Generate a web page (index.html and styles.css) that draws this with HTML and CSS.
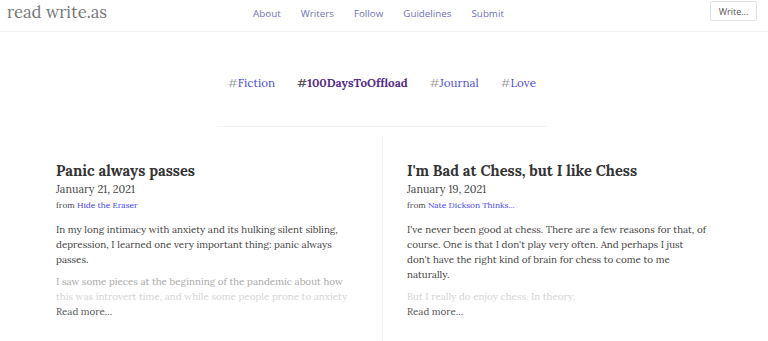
FILE: index.html
```html
<!DOCTYPE html>
<html lang="en">
<head>
<meta charset="utf-8">
<title>Read Write.as</title>
<link rel="stylesheet" href="styles.css">
</head>
<body>
<header class="topbar">
  <a class="logo" href="#">read write.as</a>
  <nav class="nav">
    <a href="#">About</a>
    <a href="#">Writers</a>
    <a href="#">Follow</a>
    <a href="#">Guidelines</a>
    <a href="#">Submit</a>
  </nav>
  <div class="actions"><a class="btn" href="#">Write...</a></div>
</header>

<main class="wrap">
  <div class="tags">
    <a class="tag" href="#"><span class="hash">#</span>Fiction</a>
    <a class="tag tag-active" href="#"><span class="hash">#</span>100DaysToOffload</a>
    <a class="tag" href="#"><span class="hash">#</span>Journal</a>
    <a class="tag" href="#"><span class="hash">#</span>Love</a>
  </div>
  <hr class="rule">

  <div class="posts">
    <article class="post">
      <h2 class="post-title">Panic always passes</h2>
      <div class="post-date">January 21, 2021</div>
      <div class="post-from">from <a href="#">Hide the Eraser</a></div>
      <div class="excerpt">
        <p>In my long intimacy with anxiety and its hulking silent sibling, depression, I learned one very important thing: panic always passes.</p>
        <p>I saw some pieces at the beginning of the pandemic about how this was introvert time, and while some people prone to anxiety</p>
      </div>
      <a class="more" href="#">Read more...</a>
    </article>
    <article class="post post-right">
      <h2 class="post-title">I'm Bad at Chess, but I like Chess</h2>
      <div class="post-date">January 19, 2021</div>
      <div class="post-from">from <a href="#">Nate Dickson Thinks...</a></div>
      <div class="excerpt">
        <p>I've never been good at chess. There are a few reasons for that, of course. One is that I don't play very often. And perhaps I just don't have the right kind of brain for chess to come to me naturally.</p>
        <p>But I really do enjoy chess. In theory.</p>
      </div>
      <a class="more" href="#">Read more...</a>
    </article>
  </div>
</main>
</body>
</html>
```
FILE: styles.css
```css
* { box-sizing: border-box; }
html, body { background: #fff; }
body {
  margin: 0;
  font-family: "Lora", "Liberation Serif", serif;
  color: #333;
  overflow: hidden;
}
a { text-decoration: none; }

.topbar {
  display: grid;
  grid-template-columns: 1fr auto 1fr;
  align-items: center;
  height: 32px;
  padding: 0 11px 0 7px;
  border-bottom: 1px solid #f2f2f2;
}
.logo {
  font-family: "Lora", "Liberation Serif", serif;
  font-size: 16.6px;
  color: #777;
  line-height: 1;
  margin-top: -6px;
}
.nav {
  display: flex;
  gap: 20px;
  margin-right: 7px;
  margin-top: -5px;
}
.nav a {
  font-family: "Open Sans", "Noto Sans", sans-serif;
  font-size: 9.8px;
  color: #7070bc;
}
.actions { display: flex; justify-content: flex-end; margin-top: -9px; }
.btn {
  display: inline-flex;
  align-items: center;
  justify-content: center;
  width: 47px;
  height: 20px;
  border: 1px solid #e2e2e2;
  border-radius: 2px;
  font-family: "Open Sans", "Noto Sans", sans-serif;
  font-size: 9px;
  color: #555;
}

.wrap {
  width: 702px;
  margin: 0 35px 0 31px;
}
.tags {
  display: flex;
  justify-content: center;
  gap: 22px;
  margin-top: 42px;
  font-size: 11.65px;
  line-height: 18px;
}
.tag { color: #4d4dd9; }
.hash { color: #999; }
.tag-active { color: #552b86; font-weight: 700; }
.tag-active .hash { color: #555; }

.rule {
  width: 330px;
  margin: 34px auto 0;
  border: 0;
  border-top: 1px solid #f3f3f3;
}

.posts {
  display: grid;
  grid-template-columns: 351px 351px;
  margin-top: 8px;
}
.post {
  padding: 26px 24px 0 25px;
  height: 220px;
}
.post-right {
  border-left: 1px solid #f1f1f1;
  padding-left: 24px;
}
.post-title {
  margin: 0;
  font-size: 14.7px;
  font-weight: 700;
  line-height: 20px;
  color: #333;
}
.post-date {
  font-size: 10.8px;
  line-height: 16px;
  color: #444;
}
.post-from {
  font-size: 8.4px;
  line-height: 16px;
  color: #444;
}
.post-from a { color: #3e3ef2; }
.excerpt {
  position: relative;
  margin-top: 9px;
  font-size: 9.85px;
  line-height: 15px;
  color: #444;
}
.excerpt p { margin: 0 0 7px; }
.excerpt p + p { color: #a8a8a8; margin-bottom: 0; }
.excerpt::after {
  content: "";
  position: absolute;
  left: 0; right: 0; bottom: 0;
  height: 16px;
  background: linear-gradient(to bottom, rgba(255,255,255,0.35), rgba(255,255,255,0.6));
}
.more {
  display: block;
  font-size: 9.8px;
  line-height: 15px;
  color: #555;
}
```
